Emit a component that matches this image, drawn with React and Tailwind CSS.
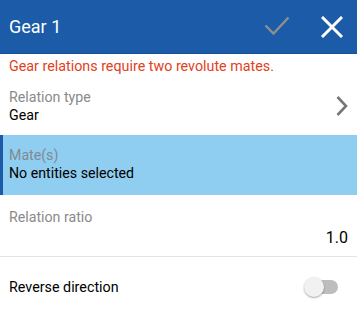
import React, { useState } from 'react'

export default function App() {
  const [reverse, setReverse] = useState(false)

  return (
    <div className="w-[357px] h-[315px] bg-white overflow-hidden font-['Roboto','Liberation_Sans',sans-serif]">
      {/* Header */}
      <div className="h-[54px] bg-[#1b5ba7] border-b border-[#17509a] flex items-center pl-[9px] pr-[14px]">
        <h1 className="flex-1 text-white text-[18px] leading-none">Gear 1</h1>
        <button className="w-[26px] h-[24px] mr-[31px] flex items-center justify-center">
          <svg width="26" height="22" viewBox="0 0 26 22" fill="none">
            <path d="M1.5 9.5 L9.5 17.5 L24.5 1.5" stroke="#8f8f8f" strokeWidth="2.4" />
          </svg>
        </button>
        <button className="w-[22px] h-[22px] flex items-center justify-center">
          <svg width="22" height="22" viewBox="0 0 22 22" fill="none">
            <path d="M1 1 L21 21 M21 1 L1 21" stroke="#ffffff" strokeWidth="3" />
          </svg>
        </button>
      </div>

      {/* Error */}
      <p className="pt-[2px] px-[9px] text-[14.3px] leading-[20px] text-[#e2411c]">
        Gear relations require two revolute mates.
      </p>

      {/* Relation type */}
      <div className="h-[59px] flex items-center pl-[9px] pr-[9px]">
        <div className="flex-1 text-[14.2px] leading-[18px]">
          <div className="text-[#8a8a8a]">Relation type</div>
          <div className="text-black">Gear</div>
        </div>
        <svg width="12" height="20" viewBox="0 0 12 20" fill="none">
          <path d="M1.5 1 L10 10 L1.5 19" stroke="#777777" strokeWidth="2.6" />
        </svg>
      </div>

      {/* Mates */}
      <div className="h-[60px] bg-[#90cef1] border-l-[3px] border-[#1b5ba7] pl-[6px] pt-[11px] text-[14.2px] leading-[18px]">
        <div className="text-[#7f8a93]">Mate(s)</div>
        <div className="text-black">No entities selected</div>
      </div>

      {/* Ratio */}
      <div className="h-[62px] border-b border-[#e3e3e3] pt-[13px] px-[9px]">
        <div className="text-[14.2px] leading-[18px] text-[#8a8a8a]">Relation ratio</div>
        <div className="text-right text-[16px] leading-[20px] pt-[2px] text-black">1.0</div>
      </div>

      {/* Reverse */}
      <div className="h-[58px] flex items-center pl-[9px] pr-[19px] pt-[3px]">
        <span className="flex-1 text-[14.3px] text-black">Reverse direction</span>
        <button
          onClick={() => setReverse(!reverse)}
          className="relative w-[34px] h-[20px] flex items-center -mt-[2px]"
        >
          <span className="absolute left-[5px] right-0 h-[14px] rounded-full bg-[#bdbdbd]" />
          <span className="absolute left-0 w-[20px] h-[20px] rounded-full bg-[#f1f1f1] shadow-[0_1px_2px_rgba(0,0,0,0.35)]" />
        </button>
      </div>
    </div>
  )
}
